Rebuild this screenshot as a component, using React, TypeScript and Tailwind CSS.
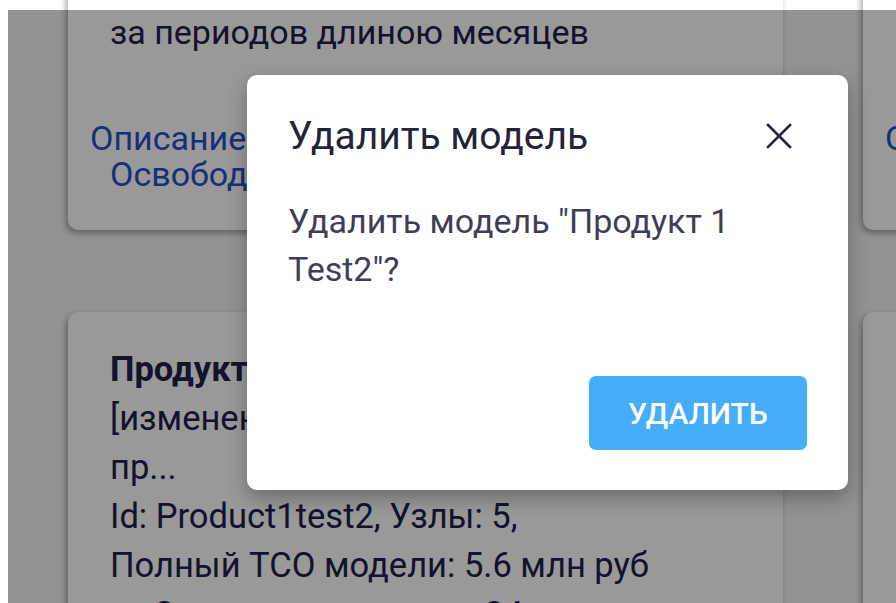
import React from 'react';

function CloseIcon() {
  return (
    <svg width="26" height="26" viewBox="0 0 26 26" fill="none" stroke="currentColor" strokeWidth="2.6" strokeLinecap="square">
      <path d="M2 2l22 22M24 2L2 24" />
    </svg>
  );
}

function SummaryCard() {
  return (
    <div className="h-[257px] rounded-[10px] bg-white pt-[34px] shadow-[-2px_3px_6px_rgba(0,0,0,0.35)]">
      <p className="pl-[42px] text-[34px] leading-[50px] text-[#20204a]">за периодов длиною месяцев</p>
      <p className="mt-[63px] pl-[42px] -indent-[20px] text-[34px] leading-[36px] text-[#2550c8]">
        Описание модели
        <br />
        Освободить ресурсы
      </p>
    </div>
  );
}

function ProductCard() {
  return (
    <div className="h-[420px] rounded-[10px] bg-white pt-[33px] pl-[42px] text-[34.5px] leading-[49px] text-[#20204a] shadow-[-2px_3px_6px_rgba(0,0,0,0.35)]">
      <div className="font-bold">Продукт 1 Test2</div>
      <div>
        [изменено] Тестовая модель для
        <br />
        пр...
      </div>
      <div>Id: Product1test2, Узлы: 5,</div>
      <div>Полный TCO модели: 5.6 млн руб</div>
      <div>за 2 периодов длиною 24 месяцев</div>
    </div>
  );
}

export default function App() {
  return (
    <div className="relative h-[603px] w-[896px] overflow-hidden bg-white font-['Roboto',sans-serif]">
      <div className="ml-2 mt-[10px] flow-root h-[593px] bg-[#f5f5f5] pl-[60px]">
        <div className="-mt-[37px] grid grid-cols-[715px_715px] gap-x-[80px] gap-y-[82px]">
          <SummaryCard />
          <SummaryCard />
          <ProductCard />
          <ProductCard />
        </div>
      </div>

      {/* backdrop */}
      <div className="absolute left-2 top-[10px] right-0 bottom-0 bg-black/40" />

      {/* delete dialog */}
      <div className="absolute left-[247px] top-[75px] flex h-[415px] w-[601px] flex-col rounded-[10px] bg-white px-[41px] pb-[40px] shadow-[0_8px_20px_rgba(0,0,0,0.3)]">
        <div className="flex h-[122px] items-center justify-between">
          <h2 className="text-[39px] leading-[48px] text-[#23233a]">Удалить модель</h2>
          <button className="mr-[15px] text-[#1e2543]">
            <CloseIcon />
          </button>
        </div>
        <p className="text-[34px] leading-[48px] text-[#3e3e57]">Удалить модель "Продукт 1 Test2"?</p>
        <div className="mt-auto flex justify-end">
          <button className="h-[74px] w-[218px] rounded-[7px] bg-[#45adfb] text-[30px] font-medium text-white">
            УДАЛИТЬ
          </button>
        </div>
      </div>
    </div>
  );
}
